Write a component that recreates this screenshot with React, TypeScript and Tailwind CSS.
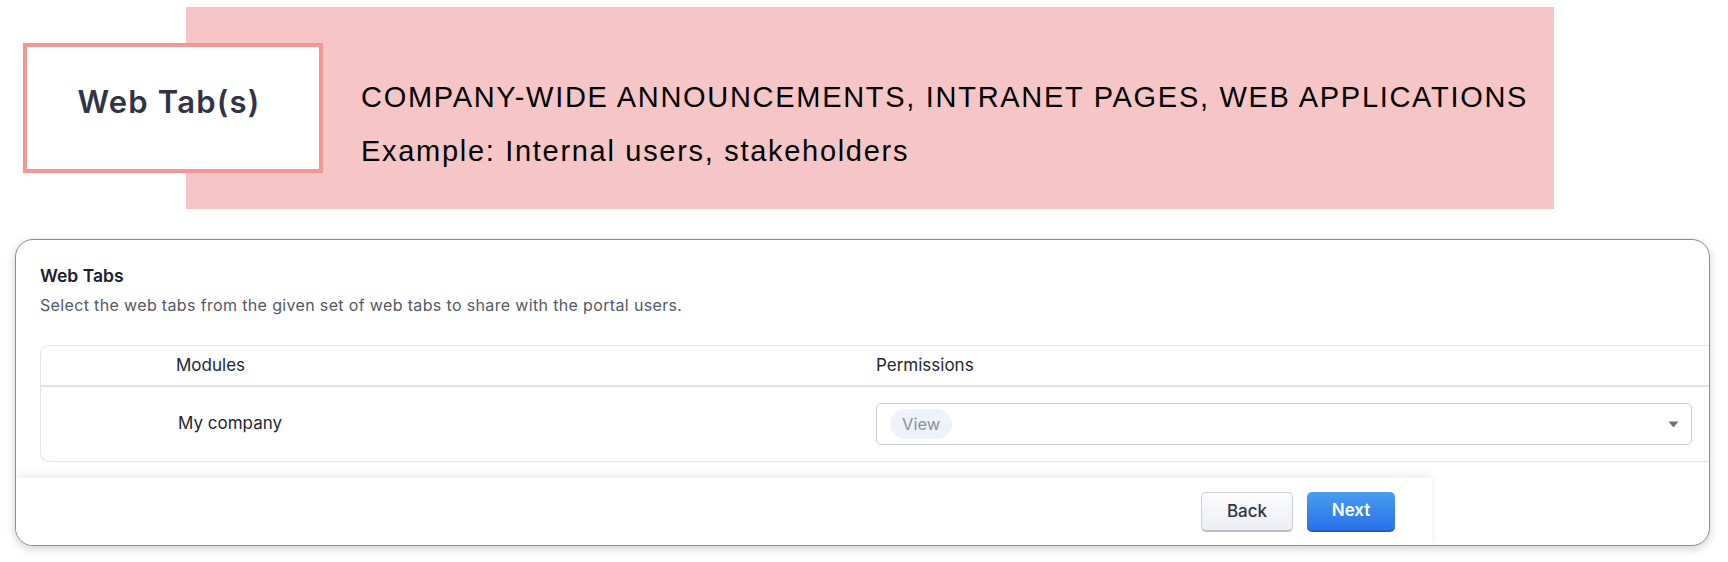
const sans = "font-['Inter','Noto_Sans',sans-serif]";

const Banner = () => (
	<div className="flex items-start">
		{/* Label box sits over the pink band */}
		<div className="relative z-10 ml-[23px] mt-[43px] flex h-[130px] w-[300px] shrink-0 items-center justify-center border-4 border-[#f19896] bg-white pb-[12px] pr-2">
			<span className={`${sans} text-[31px] font-semibold tracking-[1.2px] text-[#2f3546]`}>Web Tab(s)</span>
		</div>
		<div className="-ml-[137px] mt-[7px] h-[202px] w-[1368px] bg-[#f6c6c7] pl-[175px] pt-[63px] font-['Liberation_Sans',Arial,sans-serif] text-[29px] leading-[54px] tracking-[1.7px] text-black">
			<p>COMPANY-WIDE ANNOUNCEMENTS, INTRANET PAGES, WEB APPLICATIONS</p>
			<p>Example: Internal users, stakeholders</p>
		</div>
	</div>
);

const WebTabsCard = () => (
	<div
		className={`${sans} ml-[15px] mt-[30px] h-[307px] w-[1695px] overflow-hidden rounded-[18px] border border-[#8d8d8d] bg-white shadow-[0_3px_10px_rgba(0,0,0,0.18)]`}
	>
		<div className="pl-[24px] pt-[24px]">
			<h2 className="text-[17.5px] font-semibold leading-6 text-[#1c2028]">Web Tabs</h2>
			<p className="mt-[5px] text-[16px] leading-6 tracking-[0.35px] text-[#535966]">
				Select the web tabs from the given set of web tabs to share with the portal users.
			</p>

			{/* Modules table */}
			<div className="mt-[28px] rounded-l-[9px] border border-r-0 border-[#dfe6ef]">
				<div className="grid h-[41px] grid-cols-[835px_1fr] items-center border-b-2 border-[#dde4ee] text-[17px] text-[#23272f]">
					<span className="pl-[135px]">Modules</span>
					<span>Permissions</span>
				</div>
				<div className="grid h-[74px] grid-cols-[835px_1fr] items-center text-[17px] text-[#23272f]">
					<span className="pl-[137px]">My company</span>
					<div className="mr-[17px] flex h-[42px] items-center justify-between rounded-[5px] border border-[#c9ccd3] pl-[13px] pr-[12px]">
						<span className="flex h-[30px] items-center rounded-full bg-[#eef3fa] px-[12px] text-[16.5px] text-[#8b909a]">
							View
						</span>
						<svg width="11" height="7" viewBox="0 0 11 7" className="text-[#6d727b]">
							<path d="M0.5 0.5h10L5.5 6.5z" fill="currentColor" />
						</svg>
					</div>
				</div>
			</div>
		</div>

		{/* Footer actions */}
		<div className="mt-[16px] flex h-[68px] w-[1416px] items-center justify-end gap-[14px] bg-white pr-[37px] shadow-[0_-3px_8px_rgba(0,0,0,0.08)]">
			<button className="h-[40px] w-[92px] rounded-[5px] border border-b-2 border-[#ccd0d8] border-b-[#b9bdc6] bg-gradient-to-b from-[#fcfcfe] to-[#eceef4] text-[17px] font-medium text-[#2f3442]">
				Back
			</button>
			<button className="h-[40px] w-[88px] rounded-[5px] border-b-2 border-[#1f5ccc] bg-gradient-to-b from-[#4a9df1] to-[#2b6fe9] text-[17px] font-semibold text-white">
				Next
			</button>
		</div>
	</div>
);

export default function App() {
	return (
		<div className="h-[562px] w-full overflow-hidden bg-white">
			<Banner />
			<WebTabsCard />
		</div>
	);
}
